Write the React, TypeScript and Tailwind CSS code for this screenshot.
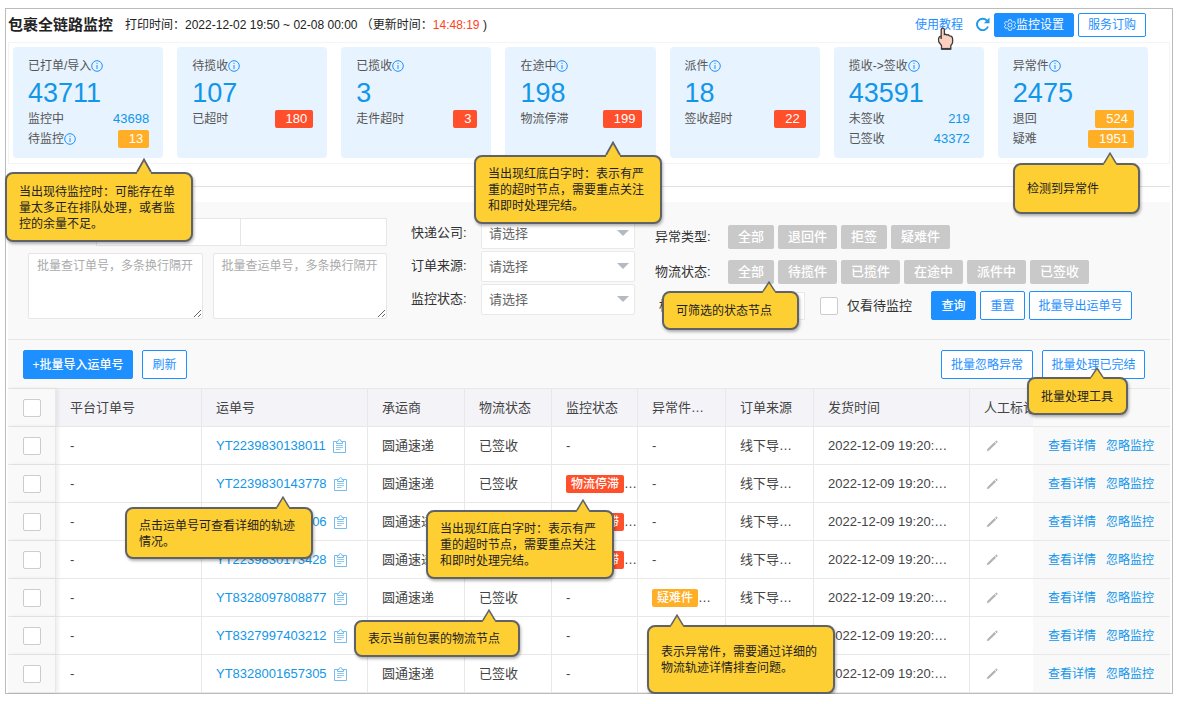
import { ReactNode } from "react"
import clsx from "clsx"

type Tone = "red" | "orange" | "plain"

interface CardRow {
  label: string
  value: string
  tone: Tone
  info?: boolean
}

interface CardData {
  title: string
  total: string
  rows: CardRow[]
}

interface Parcel {
  no: string
  monitor?: string
  exception?: string
}

const cards: CardData[] = [
  {
    title: "已打单/导入",
    total: "43711",
    rows: [
      { label: "监控中", value: "43698", tone: "plain" },
      { label: "待监控", value: "13", tone: "orange", info: true },
    ],
  },
  { title: "待揽收", total: "107", rows: [{ label: "已超时", value: "180", tone: "red" }] },
  { title: "已揽收", total: "3", rows: [{ label: "走件超时", value: "3", tone: "red" }] },
  { title: "在途中", total: "198", rows: [{ label: "物流停滞", value: "199", tone: "red" }] },
  { title: "派件", total: "18", rows: [{ label: "签收超时", value: "22", tone: "red" }] },
  {
    title: "揽收->签收",
    total: "43591",
    rows: [
      { label: "未签收", value: "219", tone: "plain" },
      { label: "已签收", value: "43372", tone: "plain" },
    ],
  },
  {
    title: "异常件",
    total: "2475",
    rows: [
      { label: "退回", value: "524", tone: "orange" },
      { label: "疑难", value: "1951", tone: "orange" },
    ],
  },
]

const parcels: Parcel[] = [
  { no: "YT2239830138011" },
  { no: "YT2239830143778", monitor: "物流停滞" },
  { no: "YT2239830155906", monitor: "物流停滞" },
  { no: "YT2239830173428", monitor: "物流停滞" },
  { no: "YT8328097808877", exception: "疑难件" },
  { no: "YT8327997403212" },
  { no: "YT8328001657305" },
]

const selects = [
  { id: "company", label: "快递公司:" },
  { id: "source", label: "订单来源:" },
  { id: "monitor", label: "监控状态:" },
]

const exceptionTypes = ["全部", "退回件", "拒签", "疑难件"]
const logisticsStates = ["全部", "待揽件", "已揽件", "在途中", "派件中", "已签收"]

function InfoIcon() {
  return (
    <svg className="size-3 shrink-0" viewBox="0 0 12 12" fill="none" stroke="#1e8fff" aria-hidden="true">
      <circle cx="6" cy="6" r="5.3" />
      <path d="M6 5v4M6 2.8v1.1" />
    </svg>
  )
}

function GearIcon() {
  return (
    <svg className="size-3 shrink-0" viewBox="0 0 24 24" fill="none" stroke="currentColor" strokeWidth="1.6" aria-hidden="true">
      <path d="M9.500 1.500h5l.7 3.300 2.300 1.300 3.200-1.100 2.500 4.300-2.500 2.200v1l2.500 2.200-2.500 4.300-3.200-1.100-2.300 1.300-.7 3.300h-5l-.7-3.300-2.300-1.300-3.200 1.100-2.500-4.300 2.500-2.200v-1L.8 9.300 3.300 5l3.200 1.100 2.300-1.300z" />
      <circle cx="12" cy="12" r="4" />
    </svg>
  )
}

function RefreshIcon() {
  return (
    <svg className="size-[15px]" viewBox="0 0 15 15" fill="none" aria-hidden="true">
      <path d="M13 9.500A5.700 5.700 0 1 1 11.800 3.500" stroke="#1a9be8" strokeWidth="1.900" />
      <path d="M14.500.6v5.600H8.900z" fill="#1a9be8" />
    </svg>
  )
}

function ClipboardIcon() {
  return (
    <svg className="h-[14px] w-[13px]" viewBox="0 0 13 14" fill="none" stroke="#74bdf0" aria-hidden="true">
      <path d="M3.500 2.500h-3v11h12v-11h-3" />
      <path d="M3.500 4.500v-2h1.500q0-2 1.500-2t1.500 2h1.500v2z" />
      <path d="M3 6.500h7M3 8.500h7M3 10.500h4.500" strokeWidth="0.8" />
    </svg>
  )
}

function PencilIcon() {
  return (
    <svg className="size-3" viewBox="0 0 12 12" fill="#b3b3b3" aria-hidden="true">
      <path d="M.8 11.300l.6-2.400 7.100-6.800 1.600 1.700-7.100 6.700zM9.100 1.500l.8-.7q.5-.4 1 0l.5.6q.4.500 0 1l-.7.800z" />
    </svg>
  )
}

function HandPointer() {
  return (
    <svg className="absolute top-[10px] left-[22px] h-[23px] w-[17px]" viewBox="0 0 17 23" aria-hidden="true">
      <path
        d="M4.200 12V3Q4.200 1.200 5.800 1.200T7.400 3V7.500Q8.500 6.800 9.800 8 11.300 7.300 12.500 8.800 15.600 8.800 15.600 12V15Q15.600 17 13.800 18.500V22H4.500V18.500L1.800 15Q1 12 2 10.300 3 9 4.200 9.500"
        fill="#fcd0c0"
        stroke="#3c3c3c"
        strokeWidth="1.300"
      />
      <path d="M4.500 21.800h9.300" stroke="#3c3c3c" strokeWidth="1.800" />
    </svg>
  )
}

function SummaryCard({ card }: { card: CardData }) {
  return (
    <section className="h-[111px] rounded bg-[#e7f3ff] pt-[10px] pr-[14px] pl-[15px] text-xs text-[#555]">
      <h2 className="flex h-[18px] items-center">
        {card.title}
        <InfoIcon />
      </h2>
      <p className="h-[34px] text-[27px] leading-[37px] text-[#1296e8]">{card.total}</p>
      {card.rows.map((row) => (
        <div key={row.label} className="flex h-5 items-center justify-between">
          <span className="flex items-center">
            {row.label}
            {row.info && <InfoIcon />}
          </span>
          <span
            className={clsx(
              "text-[13px] leading-[18px]",
              row.tone === "plain" && "text-[#1296e8]",
              row.tone === "red" && "rounded-xs bg-[#ff4f2b] pr-[6px] pl-[11px] text-white",
              row.tone === "orange" && "rounded-xs bg-[#ffae26] pr-[6px] pl-[11px] text-white"
            )}
          >
            {row.value}
          </span>
        </div>
      ))}
    </section>
  )
}

function Button({ primary, className, children }: { primary?: boolean; className?: string; children: ReactNode }) {
  return (
    <button
      type="button"
      className={clsx(
        "flex items-center justify-center rounded-xs border border-[#1e8fff] text-xs whitespace-nowrap",
        primary ? "bg-[#1e8fff] text-white" : "bg-white text-[#1e8fff]",
        className
      )}
    >
      {children}
    </button>
  )
}

function TagGroup({ label, items }: { label: string; items: string[] }) {
  return (
    <div role="group" aria-label={label} className="flex h-6 items-center">
      <span className="w-[73px] shrink-0">{label}</span>
      <div className="flex gap-1">
        {items.map((item) => (
          <button key={item} type="button" className="h-6 rounded-xs bg-[#c9c9c9] px-[10px] font-medium whitespace-nowrap text-white">
            {item}
          </button>
        ))}
      </div>
    </div>
  )
}

function Checkbox({ id, label }: { id?: string; label?: string }) {
  return (
    <input
      id={id}
      type="checkbox"
      aria-label={label}
      className="block size-[18px] shrink-0 appearance-none rounded-xs border border-[#ccc] bg-white checked:bg-[#1e8fff]"
    />
  )
}

function StatusTag({ text, tone }: { text?: string; tone: "red" | "orange" }) {
  if (!text) return <>-</>
  return (
    <>
      <span
        className={clsx(
          "inline-block rounded-xs px-[5px] text-xs leading-[18px] font-medium text-white",
          tone === "red" ? "bg-[#ff4f2b]" : "bg-[#ffae26]"
        )}
      >
        {text}
      </span>
      …
    </>
  )
}

// box and tail take their place on the page through classes
function Callout({ box, tail, children }: { box: string; tail: string; children: ReactNode }) {
  return (
    <aside
      className={clsx(
        "absolute flex items-center rounded-lg border-2 border-[#5f6368] bg-[#fecf33] px-3 text-xs leading-4 text-[#222] shadow-[1px_2px_3px_rgba(0,0,0,0.3)]",
        box
      )}
    >
      <svg className={clsx("absolute", tail)} viewBox="0 0 16 16" preserveAspectRatio="none" aria-hidden="true">
        <path d="M1 14L8 1.500 15 14V16H1z" fill="#fecf33" />
        <path d="M1 14L8 1.500 15 14" fill="none" stroke="#5f6368" strokeWidth="1.800" />
      </svg>
      <p className="pt-px whitespace-nowrap">{children}</p>
    </aside>
  )
}

function Header() {
  return (
    <header className="flex h-[33px] items-center pr-6 pb-[2px] text-xs">
      <h1 className="text-[15px] font-bold text-[#222]">包裹全链路监控</h1>
      <p className="ml-3 whitespace-pre text-[#222]">
        打印时间：2022-12-02 19:50 ~ 02-08 00:00 （更新时间：<span className="text-[#ff4320]">14:48:19</span> )
      </p>
      <div className="ml-auto flex items-center">
        <a href="#guide" className="relative text-[#1e8fff]">
          使用教程
          <HandPointer />
        </a>
        <button type="button" aria-label="刷新数据" className="ml-3">
          <RefreshIcon />
        </button>
        <Button primary className="ml-1 h-6 w-20">
          <GearIcon />
          监控设置
        </Button>
        <Button className="ml-1 h-6 w-[68px]">服务订购</Button>
      </div>
    </header>
  )
}

function Filters() {
  return (
    <form className="flex h-[138px] gap-5 border-b border-[#e6e6e6] bg-[#f9f9f9] pt-4 pl-5 text-[13px] text-[#333]">
      <div className="mr-1 w-[359px]">
        <div className="flex h-7">
          <div className="w-[68px]" />
          <input aria-label="开始时间" className="w-[145px] border border-[#e6e6e6] bg-white" />
          <input aria-label="结束时间" className="w-[146px] border border-l-0 border-[#e6e6e6] bg-white" />
        </div>
        <div className="mt-[7px] flex gap-[10px] text-xs">
          <textarea
            aria-label="批量查订单号"
            placeholder="批量查订单号，多条换行隔开"
            className="h-[66px] min-w-0 flex-1 overflow-hidden rounded-xs border border-[#e6e6e6] bg-white px-2 py-1 placeholder:text-[#aaa]"
          />
          <textarea
            aria-label="批量查运单号"
            placeholder="批量查运单号，多条换行隔开"
            className="h-[66px] min-w-0 flex-1 overflow-hidden rounded-xs border border-[#e6e6e6] bg-white px-2 py-1 placeholder:text-[#aaa]"
          />
        </div>
      </div>

      <div className="flex flex-col gap-[2px]">
        {selects.map((item) => (
          <div key={item.id} className="flex items-center">
            <label htmlFor={item.id} className="w-[70px] pb-[2px]">
              {item.label}
            </label>
            <div className="relative">
              <select id={item.id} className="h-[31px] w-[154px] appearance-none rounded-xs border border-[#e9e9e9] bg-white pl-[7px] text-[#666]">
                <option>请选择</option>
              </select>
              <span className="pointer-events-none absolute top-3 right-[6px] border-x-[6px] border-t-[6px] border-x-transparent border-t-[#b4bac4]" />
            </div>
          </div>
        ))}
      </div>

      <div className="flex flex-col pt-[7px]">
        <TagGroup label="异常类型:" items={exceptionTypes} />
        <div className="h-[11px]" />
        <TagGroup label="物流状态:" items={logisticsStates} />
        <div className="mt-[7px] flex h-[29px] items-center">
          <label htmlFor="mark" className="w-[73px] pl-1">
            标记:
          </label>
          <input id="mark" className="h-[28px] w-[77px] border border-[#e9e9e9] bg-white" />
          <div className="ml-[15px] flex items-center gap-[9px]">
            <Checkbox id="pending" />
            <label htmlFor="pending">仅看待监控</label>
          </div>
          <Button primary className="ml-[19px] h-[29px] w-[45px] font-medium">
            查询
          </Button>
          <Button className="ml-1 h-[29px] w-[45px]">重置</Button>
          <Button className="ml-1 h-[29px] w-[103px]">批量导出运单号</Button>
        </div>
      </div>
    </form>
  )
}

function ParcelTable() {
  const cell = "overflow-hidden border-r border-b border-[#e8e8e8] pl-[14px] whitespace-nowrap"
  const fixed = "border-b border-[#e8e8e8] bg-[#f9f9f9] pl-[15px]"
  return (
    <table className="w-full table-fixed border-separate border-spacing-0 text-left text-[13px] text-[#444]">
      <colgroup>
        <col className="w-[48px]" />
        <col className="w-[146px]" />
        <col className="w-[166px]" />
        <col className="w-[97px]" />
        <col className="w-[87px]" />
        <col className="w-[86px]" />
        <col className="w-[88px]" />
        <col className="w-[88px]" />
        <col className="w-[156px]" />
        <col className="w-[63px]" />
        <col className="w-[137px]" />
      </colgroup>
      <thead>
        <tr className="h-[38px] bg-[#f3f3f8]">
          <th className={clsx(fixed, "border-r shadow-[2px_0_4px_rgba(0,0,0,0.08)]")}>
            <Checkbox label="全选" />
          </th>
          {["平台订单号", "运单号", "承运商", "物流状态", "监控状态", "异常件…", "订单来源", "发货时间"].map((name) => (
            <th key={name} className={clsx(cell, "font-normal")}>
              {name}
            </th>
          ))}
          <th className="overflow-hidden border-b border-[#e8e8e8] pl-[14px] font-normal whitespace-nowrap">人工标记</th>
          <th className={fixed} />
        </tr>
      </thead>
      <tbody>
        {parcels.map((parcel) => (
          <tr key={parcel.no} className="h-[38px]">
            <td className={clsx(fixed, "border-r shadow-[2px_0_4px_rgba(0,0,0,0.08)]")}>
              <Checkbox label={parcel.no} />
            </td>
            <td className={cell}>-</td>
            <td className={cell}>
              <div className="flex items-center gap-[7px]">
                <a href={`#${parcel.no}`} className="text-[#1296e8]">
                  {parcel.no}
                </a>
                <button type="button" aria-label="复制运单号">
                  <ClipboardIcon />
                </button>
              </div>
            </td>
            <td className={cell}>圆通速递</td>
            <td className={cell}>已签收</td>
            <td className={cell}>
              <StatusTag text={parcel.monitor} tone="red" />
            </td>
            <td className={cell}>
              <StatusTag text={parcel.exception} tone="orange" />
            </td>
            <td className={cell}>线下导…</td>
            <td className={cell}>2022-12-09 19:20:…</td>
            <td className="border-b border-[#e8e8e8] pl-4">
              <button type="button" aria-label="编辑标记" className="block">
                <PencilIcon />
              </button>
            </td>
            <td className={fixed}>
              <div className="flex gap-[10px] text-xs text-[#1296e8]">
                <a href="#detail">查看详情</a>
                <a href="#ignore">忽略监控</a>
              </div>
            </td>
          </tr>
        ))}
      </tbody>
    </table>
  )
}

export default function App() {
  return (
    <div className="relative bg-white pt-2 pr-[7px] pl-[5px] font-['Liberation_Sans','Noto_Sans_CJK_SC',sans-serif]">
      <main className="border border-[#bbb] px-[2px]">
        <Header />

        <div className="grid grid-cols-7 gap-[14px] border border-[#f4f4f4] pt-1 pr-[21px] pb-[5px] pl-1">
          {cards.map((card) => (
            <SummaryCard key={card.title} card={card} />
          ))}
        </div>

        <hr className="mt-[22px] mb-[15px] border-[#e2e2e2]" />

        <Filters />

        <div className="flex h-[49px] items-center border-b border-[#e8e8e8] bg-[#f9f9f9] pt-px pr-[25px] pl-[15px]">
          <Button primary className="h-[29px] w-[110px] font-medium">
            +批量导入运单号
          </Button>
          <Button className="ml-[9px] h-[29px] w-[45px]">刷新</Button>
          <Button className="ml-auto h-[29px] w-[92px]">批量忽略异常</Button>
          <Button className="ml-[9px] h-[29px] w-[103px]">批量处理已完结</Button>
        </div>

        <ParcelTable />
      </main>

      <Callout box="top-[172px] left-[5px] h-[70px] w-[188px]" tail="-top-4 left-[129px] size-4">
        当出现待监控时：可能存在单
        <br />
        量太多正在排队处理，或者监
        <br />
        控的余量不足。
      </Callout>
      <Callout box="top-[155px] left-[474px] h-[69px] w-[188px]" tail="-top-4 left-[129px] size-4">
        当出现红底白字时：表示有严
        <br />
        重的超时节点，需要重点关注
        <br />
        和即时处理完结。
      </Callout>
      <Callout box="top-[163px] left-[1013px] h-[51px] w-[127px]" tail="-top-[13px] left-[88px] h-[13px] w-[14px]">
        检测到异常件
      </Callout>
      <Callout box="top-[291px] left-[662px] h-[39px] w-[137px]" tail="-top-3 left-[98px] h-3 w-[14px]">
        可筛选的状态节点
      </Callout>
      <Callout box="top-[377px] left-[1027px] h-[38px] w-[101px]" tail="-top-3 left-[61px] h-3 w-[14px]">
        批量处理工具
      </Callout>
      <Callout box="top-[507px] left-[125px] h-[52px] w-[188px]" tail="-top-[13px] left-[149px] h-[13px] w-[14px]">
        点击运单号可查看详细的轨迹
        <br />
        情况。
      </Callout>
      <Callout box="top-[510px] left-[426px] h-[69px] w-[188px]" tail="-top-[13px] left-[148px] h-[13px] w-[14px]">
        当出现红底白字时：表示有严
        <br />
        重的超时节点，需要重点关注
        <br />
        和即时处理完结。
      </Callout>
      <Callout box="top-[620px] left-[354px] h-[37px] w-[166px]" tail="-top-[13px] left-[126px] h-[13px] w-[14px]">
        表示当前包裹的物流节点
      </Callout>
      <Callout box="top-[625px] left-[647px] h-[69px] w-[188px]" tail="-top-[13px] left-[21px] h-[13px] w-[14px]">
        表示异常件，需要通过详细的
        <br />
        物流轨迹详情排查问题。
      </Callout>
    </div>
  )
}
